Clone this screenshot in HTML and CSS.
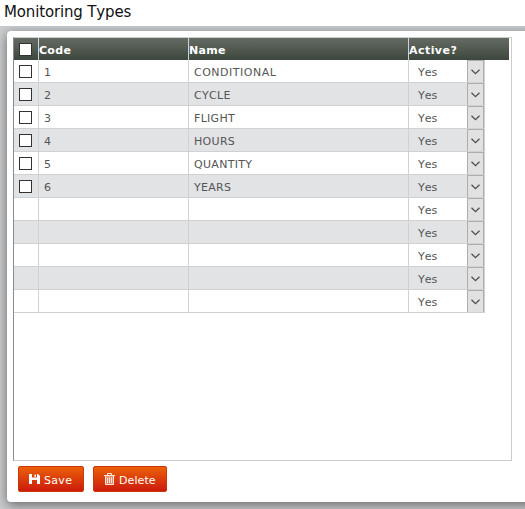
FILE: index.html
```
<!DOCTYPE html>
<html lang="en">
<head>
<meta charset="utf-8">
<title>Monitoring Types</title>
<link rel="stylesheet" href="styles.css">
</head>
<body>
<h1 class="title">Monitoring Types</h1>
<main class="backdrop">
  <section class="panel">
    <div class="grid-box">
      <div class="row head">
        <div class="pick"><span class="check"></span></div><div class="code">Code</div><div class="name">Name</div><div class="active">Active?</div>
      </div>
      <div id="rows"></div>
    </div>
    <div class="actions">
      <button class="btn save"><svg width="11" height="11" viewBox="0 0 11 11"><path fill="#fff" fill-rule="evenodd" d="M0 0H9L11 2V10H8V6H3V10H0ZM3 0V3.500H8V0ZM5.500 .5H7V3H5.500Z"/></svg><span>Save</span></button>
      <button class="btn delete"><svg width="11" height="12" viewBox="0 0 11 12"><path fill="#fff" fill-opacity=".4" d="M2 3H9V11H2Z"/><path fill="none" stroke="#ffe9dc" d="M0 2.500H11M3.500 2V.5H7.500V2M1.500 3V11.500H9.500V3M3.500 4.500V10M5.500 4.500V10M7.500 4.500V10"/></svg><span>Delete</span></button>
    </div>
  </section>
</main>
<script src="script.js"></script>
</body>
</html>
```
FILE: styles.css
```
* { box-sizing: border-box; }
body {
  margin: 0;
  height: 509px;
  overflow: hidden;
  background: #fff;
  font-family: Verdana, "DejaVu Sans", sans-serif;
  font-size: 11px;
  font-kerning: none;
  color: #555;
}
.title {
  margin: 0;
  height: 26px;
  padding-left: 4px;
  font-size: 15px;
  line-height: 24px;
  font-weight: 400;
  letter-spacing: -0.15px;
  color: #111;
}
.backdrop {
  height: 483px;
  padding: 5px 0 8px 7px;
  background: #cbccce;
  overflow: hidden;
}
.panel {
  width: 540px;
  height: 471px;
  padding: 6px;
  background: #fff;
  border-radius: 4px;
  box-shadow: 0 3px 12px rgba(0, 0, 0, 0.5);
}
.grid-box {
  width: 499px;
  height: 424px;
  border: 1px solid #ccc;
  border-left-color: #888c90;
}
.row {
  display: grid;
  grid-template-columns: 25px 150px 220px 76px;
  grid-template-rows: 23px;
  width: 471px;
  height: 23px;
  line-height: 25px;
}
.row > div {
  border-right: 1px solid #d0d1d3;
  border-bottom: 1px solid #d0d1d3;
}
.row:nth-child(even) > div { background: #e2e3e5; }
.row.head {
  grid-template-rows: 22px;
  width: 495px;
  height: 22px;
  background: linear-gradient(#656b64, #3d473d);
  color: #fff;
  font-weight: 700;
}
.head > div { border-bottom: 0; }
.head > .active { border-right: 0; }
.pick { padding: 5px 0 0 5px; }
.check {
  display: block;
  width: 13px;
  height: 13px;
  background: #fff;
  border: 1px solid #333;
}
.head .code, .head .name { letter-spacing: 0.3px; }
.head .active { letter-spacing: 0.45px; }
.row:not(.head) .code, .row:not(.head) .name { padding-left: 5px; }
.row:not(.head) .name { letter-spacing: 0.3px; }
.row:first-child:not(.head) .name { letter-spacing: 0.5px; }
.row:not(.head) .active {
  display: flex;
  justify-content: space-between;
  padding-left: 9px;
}
.arrow {
  display: grid;
  place-items: center;
  width: 17px;
  height: 22px;
  background: #e1e1e1;
  border: 1px solid #adadad;
  border-bottom: 0;
}
.actions {
  display: flex;
  gap: 9px;
  padding: 5px 0 0 5px;
}
.btn {
  display: flex;
  align-items: center;
  gap: 5px;
  height: 26px;
  padding: 0 0 0 10px;
  border: 1px solid #cc3708;
  border-radius: 2px;
  background: linear-gradient(#eb6009, #cc1b0c);
  color: #fff;
  font: inherit;
}
.btn span { padding-top: 2px; }
.save { width: 66px; gap: 4px; letter-spacing: 0.3px; }
.delete { width: 74px; gap: 4px; letter-spacing: 0.1px; }
```
FILE: script.js
```
const names = ["CONDITIONAL", "CYCLE", "FLIGHT", "HOURS", "QUANTITY", "YEARS", "", "", "", "", ""];
document.getElementById("rows").innerHTML = names.map((name, i) => `
  <div class="row">
    <div class="pick">${name ? '<span class="check"></span>' : ""}</div>
    <div class="code">${name ? i + 1 : ""}</div>
    <div class="name">${name}</div>
    <div class="active"><span>Yes</span><span class="arrow"><svg width="9" height="6" viewBox="0 0 9 6"><path d="M.5 .7L4.500 4.700L8.500 .7" fill="none" stroke="#505050" stroke-width="1.300"/></svg></span></div>
  </div>`).join("");
```
